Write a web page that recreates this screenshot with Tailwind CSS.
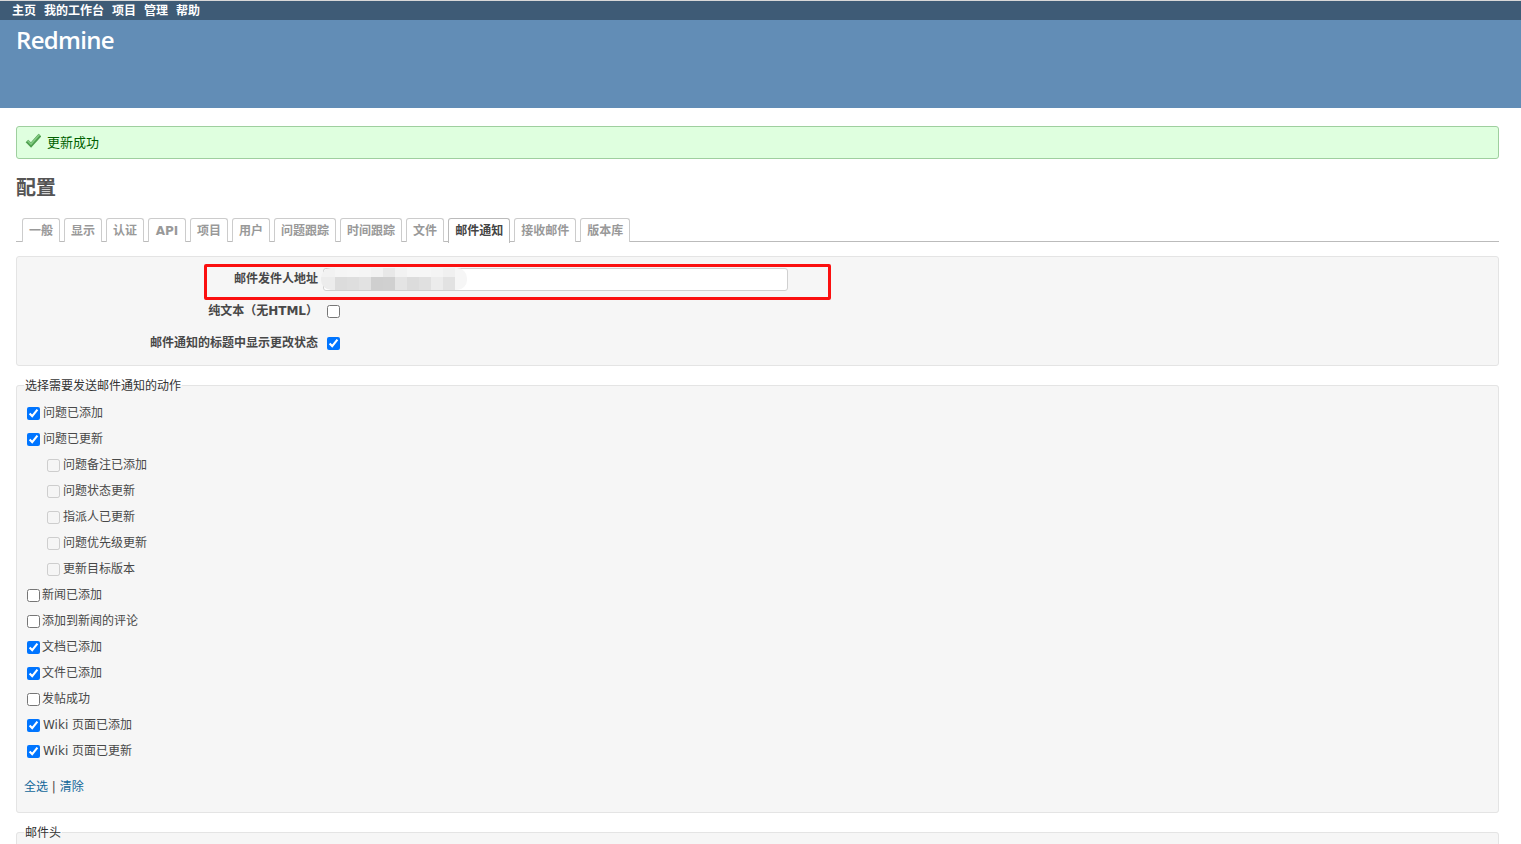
<!DOCTYPE html>
<html lang="zh-CN">
<head>
  <meta charset="UTF-8">
  <title>配置 - Redmine</title>
  <script src="https://cdn.jsdelivr.net/npm/@tailwindcss/browser@4"></script>
</head>
<body class="h-[844px] overflow-hidden bg-white text-[12px] text-[#484848] font-['DejaVu_Sans','Noto_Sans_CJK_SC',sans-serif]">

  <!-- top menu -->
  <div class="flex h-5 items-center gap-2 border-t border-[#d8d8d8] bg-[#3e5b76] pl-3 font-bold text-white">
    <a>主页</a><a>我的工作台</a><a>项目</a><a>管理</a><a>帮助</a>
  </div>

  <!-- header -->
  <div class="h-[88px] bg-[#628db6] pl-4 pt-[5px] text-[24px] leading-[30px] font-semibold tracking-[-0.7px] text-white font-['Open_Sans',sans-serif]">Redmine</div>

  <div class="pt-[18px] pr-[22px] pl-4">
    <!-- flash -->
    <div class="flex h-[33px] items-center gap-[6px] rounded-[3px] border border-[#9fcf9f] bg-[#dfffdf] pl-[8px] text-[13px] text-[#005f00]">
      <svg class="mb-[5px] h-[16px] w-[16px]" viewBox="0 0 16 16" fill="none">
        <path d="M2 9 L6 13 L15 3" stroke="#4f9f4f" stroke-width="3.8"/>
        <path d="M2.5 8.5 L6 12 L14.5 2.5" stroke="#84cc84" stroke-width="1.6"/>
      </svg>
      <span>更新成功</span>
    </div>

    <h2 class="mt-[17px] text-[20px] leading-[24px] font-bold text-[#555]">配置</h2>

    <!-- tabs -->
    <div class="mt-[18px] flex h-6 gap-1 border-b border-[#bbbbbb] pl-[6px]">
      <a class="h-6 rounded-t-[3px] border border-b-0 border-[#cccccc] bg-white px-[6px] leading-[24px] font-bold text-[#999]">一般</a>
      <a class="h-6 rounded-t-[3px] border border-b-0 border-[#cccccc] bg-white px-[6px] leading-[24px] font-bold text-[#999]">显示</a>
      <a class="h-6 rounded-t-[3px] border border-b-0 border-[#cccccc] bg-white px-[6px] leading-[24px] font-bold text-[#999]">认证</a>
      <a class="h-6 w-[38px] rounded-t-[3px] border border-b-0 border-[#cccccc] bg-white text-center leading-[24px] font-bold text-[#999]">API</a>
      <a class="h-6 rounded-t-[3px] border border-b-0 border-[#cccccc] bg-white px-[6px] leading-[24px] font-bold text-[#999]">项目</a>
      <a class="h-6 rounded-t-[3px] border border-b-0 border-[#cccccc] bg-white px-[6px] leading-[24px] font-bold text-[#999]">用户</a>
      <a class="h-6 rounded-t-[3px] border border-b-0 border-[#cccccc] bg-white px-[6px] leading-[24px] font-bold text-[#999]">问题跟踪</a>
      <a class="h-6 rounded-t-[3px] border border-b-0 border-[#cccccc] bg-white px-[6px] leading-[24px] font-bold text-[#999]">时间跟踪</a>
      <a class="h-6 rounded-t-[3px] border border-b-0 border-[#cccccc] bg-white px-[6px] leading-[24px] font-bold text-[#999]">文件</a>
      <a class="h-[25px] rounded-t-[3px] border border-b-0 border-[#bbbbbb] bg-white px-[6px] leading-[24px] font-bold text-[#444]">邮件通知</a>
      <a class="h-6 rounded-t-[3px] border border-b-0 border-[#cccccc] bg-white px-[6px] leading-[24px] font-bold text-[#999]">接收邮件</a>
      <a class="h-6 rounded-t-[3px] border border-b-0 border-[#cccccc] bg-white px-[6px] leading-[24px] font-bold text-[#999]">版本库</a>
    </div>

    <!-- sender settings box -->
    <div class="relative mt-[14px] h-[110px] rounded-[3px] border border-[#e4e4e4] bg-[#f6f6f6] pt-[11px]">
      <div class="flex h-[23px] items-center">
        <label class="w-[301px] pb-[2px] text-right font-bold">邮件发件人地址</label>
        <div class="relative ml-[5px] h-[23px] w-[465px] rounded-[3px] border border-[#d0d0d0] bg-white"></div>
      </div>
      <div class="mt-[8px] flex h-6 items-center">
        <label class="w-[301px] text-right font-bold">纯文本（无HTML）</label>
        <input type="checkbox" class="ml-[9px] h-[13px] w-[13px]">
      </div>
      <div class="mt-2 flex h-6 items-center">
        <label class="w-[301px] text-right font-bold">邮件通知的标题中显示更改状态</label>
        <input type="checkbox" checked class="ml-[9px] h-[13px] w-[13px]">
      </div>

      <!-- blurred address, over the input -->
      <div class="absolute top-[11px] left-[304px] grid h-[22px] w-[146px] grid-cols-[14px_repeat(10,12px)_1fr] grid-rows-[9px_1fr] overflow-hidden rounded-[10px]">
        <i class="bg-[#f2f2f2]"></i><i class="bg-[#f5f5f5]"></i><i class="bg-[#f6f6f6]"></i><i class="bg-[#f5f5f5]"></i><i class="bg-[#f2f2f2]"></i><i class="bg-[#e8e8e8]"></i><i class="bg-[#f2f2f2]"></i><i class="bg-[#f6f6f6]"></i><i class="bg-[#f6f6f6]"></i><i class="bg-[#f4f4f4]"></i><i class="bg-[#f0f0f0]"></i><i class="bg-[#f6f6f6]"></i>
        <i class="bg-[#ececec]"></i><i class="bg-[#dcdcdc]"></i><i class="bg-[#dedede]"></i><i class="bg-[#e2e2e2]"></i><i class="bg-[#cfcfcf]"></i><i class="bg-[#d0d0d0]"></i><i class="bg-[#e4e4e4]"></i><i class="bg-[#dcdcdc]"></i><i class="bg-[#e0e0e0]"></i><i class="bg-[#ececec]"></i><i class="bg-[#e2e2e2]"></i><i class="bg-[#f6f6f6]"></i>
      </div>

      <!-- red highlight -->
      <div class="absolute top-[7px] left-[187px] h-[36px] w-[627px] rounded-[2px] border-[3px] border-[#fb1010]"></div>
    </div>

    <!-- notified actions -->
    <fieldset class="mt-[12px] h-[435px] rounded-[3px] border border-[#e4e4e4] bg-[#f6f6f6] px-[10px]">
      <legend class="ml-[-3px] translate-y-px px-[1px] text-[#333] leading-[14px]">选择需要发送邮件通知的动作</legend>
      <div class="mt-[8px]">
        <label class="flex h-[26px] items-center gap-[3px]"><input type="checkbox" checked class="h-[13px] w-[13px]">问题已添加</label>
        <label class="flex h-[26px] items-center gap-[3px]"><input type="checkbox" checked class="h-[13px] w-[13px]">问题已更新</label>
        <label class="flex h-[26px] items-center gap-[3px] pl-5"><input type="checkbox" disabled class="h-[13px] w-[13px]">问题备注已添加</label>
        <label class="flex h-[26px] items-center gap-[3px] pl-5"><input type="checkbox" disabled class="h-[13px] w-[13px]">问题状态更新</label>
        <label class="flex h-[26px] items-center gap-[3px] pl-5"><input type="checkbox" disabled class="h-[13px] w-[13px]">指派人已更新</label>
        <label class="flex h-[26px] items-center gap-[3px] pl-5"><input type="checkbox" disabled class="h-[13px] w-[13px]">问题优先级更新</label>
        <label class="flex h-[26px] items-center gap-[3px] pl-5"><input type="checkbox" disabled class="h-[13px] w-[13px]">更新目标版本</label>
        <label class="flex h-[26px] items-center gap-[2px]"><input type="checkbox" class="h-[13px] w-[13px]">新闻已添加</label>
        <label class="flex h-[26px] items-center gap-[2px]"><input type="checkbox" class="h-[13px] w-[13px]">添加到新闻的评论</label>
        <label class="flex h-[26px] items-center gap-[2px]"><input type="checkbox" checked class="h-[13px] w-[13px]">文档已添加</label>
        <label class="flex h-[26px] items-center gap-[2px]"><input type="checkbox" checked class="h-[13px] w-[13px]">文件已添加</label>
        <label class="flex h-[26px] items-center gap-[2px]"><input type="checkbox" class="h-[13px] w-[13px]">发帖成功</label>
        <label class="flex h-[26px] items-center gap-[3px]"><input type="checkbox" checked class="h-[13px] w-[13px]">Wiki 页面已添加</label>
        <label class="flex h-[26px] items-center gap-[3px]"><input type="checkbox" checked class="h-[13px] w-[13px]">Wiki 页面已更新</label>
      </div>
      <p class="mt-[15px] -ml-[3px] leading-[16px]"><a class="text-[#169]">全选</a> | <a class="text-[#169]">清除</a></p>
    </fieldset>

    <!-- mail headers -->
    <fieldset class="mt-[12px] h-[60px] rounded-[3px] border border-[#e4e4e4] bg-[#f6f6f6] px-[10px]">
      <legend class="ml-[-3px] translate-y-px px-[1px] text-[#333] leading-[14px]">邮件头</legend>
    </fieldset>
  </div>
</body>
</html>
